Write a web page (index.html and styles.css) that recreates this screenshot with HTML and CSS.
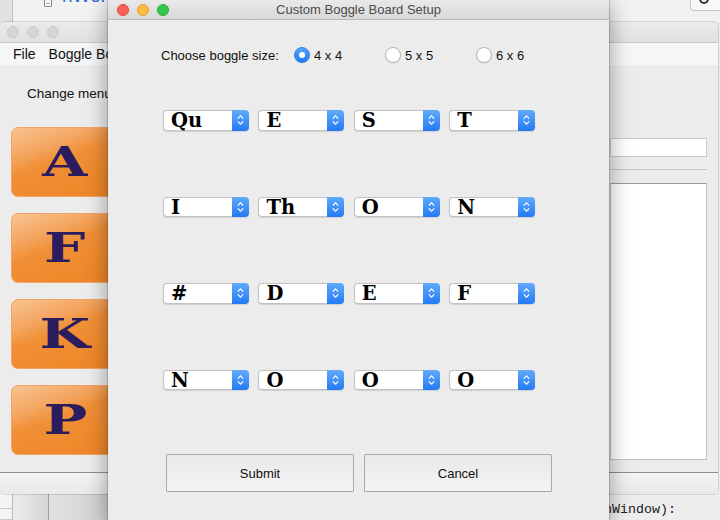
FILE: index.html
```html
<!DOCTYPE html>
<html>
<head>
<meta charset="utf-8">
<link rel="stylesheet" href="styles.css">
</head>
<body>
<div class="desktop">
  <div class="ide-top">
    <div class="ide-gutter"></div>
    <svg class="file-icon" width="12" height="8" viewBox="0 0 12 8"><path d="M1.5 0 V6.5 H8.5 V0" fill="#f4f4f4" stroke="#8d8d8d" stroke-width="1"/><path d="M3 3.5 H7" stroke="#b0b0b0"/></svg>
    <span class="ide-tab">hWorld</span>
    <div class="ide-spacer"></div>
    <div class="ide-btn"><svg width="30" height="11" viewBox="0 0 30 11"><circle cx="13" cy="-1" r="4" fill="none" stroke="#333" stroke-width="2"/></svg></div>
  </div>
  <div class="ide-mid"></div>
  <div class="ide-bottom">
    <div class="tbl-a"><div class="tbl-row"></div><div class="tbl-row"></div></div>
    <div class="tbl-b"></div>
    <div class="tbl-c"></div>
    <div class="code"><span class="code-text">mainWindow):</span></div>
  </div>

  <div class="main-window">
    <div class="mw-title">
      <span class="gdot"></span><span class="gdot"></span><span class="gdot"></span>
    </div>
    <div class="mw-menu"><span>File</span><span>Boggle Board</span></div>
    <div class="mw-body">
      <div class="mw-left">
        <div class="mw-label">Change menu</div>
        <div class="tiles">
          <div class="tile"><span class="tile-letter">A</span></div>
          <div class="tile"><span class="tile-letter">F</span></div>
          <div class="tile"><span class="tile-letter">K</span></div>
          <div class="tile"><span class="tile-letter">P</span></div>
        </div>
      </div>
      <div class="mw-right">
        <div class="field"></div>
        <div class="sep"></div>
        <div class="area"></div>
      </div>
    </div>
    <div class="mw-bottom"></div>
  </div>

  <div class="dialog">
    <div class="dlg-title">
      <div class="lights"><span class="light red"></span><span class="light yellow"></span><span class="light green"></span></div>
      <div class="dlg-title-text">Custom Boggle Board Setup</div>
    </div>
    <div class="dlg-body">
      <div class="size-row">
        <span class="size-label">Choose boggle size:</span>
        <span class="radio-opt"><span class="radio on"></span>4 x 4</span>
        <span class="radio-opt"><span class="radio"></span>5 x 5</span>
        <span class="radio-opt"><span class="radio"></span>6 x 6</span>
      </div>
      <div class="board">
        <div class="combo"><span class="combo-text">Qu</span><span class="combo-arrow"><svg width="9" height="12" viewBox="0 0 9 12"><path d="M1.8 4.6 L4.5 1.9 L7.2 4.6 M1.8 7.4 L4.5 10.1 L7.2 7.4" fill="none" stroke="#fff" stroke-width="1.2"/></svg></span></div>
        <div class="combo"><span class="combo-text">E</span><span class="combo-arrow"><svg width="9" height="12" viewBox="0 0 9 12"><path d="M1.8 4.6 L4.5 1.9 L7.2 4.6 M1.8 7.4 L4.5 10.1 L7.2 7.4" fill="none" stroke="#fff" stroke-width="1.2"/></svg></span></div>
        <div class="combo"><span class="combo-text">S</span><span class="combo-arrow"><svg width="9" height="12" viewBox="0 0 9 12"><path d="M1.8 4.6 L4.5 1.9 L7.2 4.6 M1.8 7.4 L4.5 10.1 L7.2 7.4" fill="none" stroke="#fff" stroke-width="1.2"/></svg></span></div>
        <div class="combo"><span class="combo-text">T</span><span class="combo-arrow"><svg width="9" height="12" viewBox="0 0 9 12"><path d="M1.8 4.6 L4.5 1.9 L7.2 4.6 M1.8 7.4 L4.5 10.1 L7.2 7.4" fill="none" stroke="#fff" stroke-width="1.2"/></svg></span></div>

        <div class="combo"><span class="combo-text">I</span><span class="combo-arrow"><svg width="9" height="12" viewBox="0 0 9 12"><path d="M1.8 4.6 L4.5 1.9 L7.2 4.6 M1.8 7.4 L4.5 10.1 L7.2 7.4" fill="none" stroke="#fff" stroke-width="1.2"/></svg></span></div>
        <div class="combo"><span class="combo-text">Th</span><span class="combo-arrow"><svg width="9" height="12" viewBox="0 0 9 12"><path d="M1.8 4.6 L4.5 1.9 L7.2 4.6 M1.8 7.4 L4.5 10.1 L7.2 7.4" fill="none" stroke="#fff" stroke-width="1.2"/></svg></span></div>
        <div class="combo"><span class="combo-text">O</span><span class="combo-arrow"><svg width="9" height="12" viewBox="0 0 9 12"><path d="M1.8 4.6 L4.5 1.9 L7.2 4.6 M1.8 7.4 L4.5 10.1 L7.2 7.4" fill="none" stroke="#fff" stroke-width="1.2"/></svg></span></div>
        <div class="combo"><span class="combo-text">N</span><span class="combo-arrow"><svg width="9" height="12" viewBox="0 0 9 12"><path d="M1.8 4.6 L4.5 1.9 L7.2 4.6 M1.8 7.4 L4.5 10.1 L7.2 7.4" fill="none" stroke="#fff" stroke-width="1.2"/></svg></span></div>

        <div class="combo"><span class="combo-text">#</span><span class="combo-arrow"><svg width="9" height="12" viewBox="0 0 9 12"><path d="M1.8 4.6 L4.5 1.9 L7.2 4.6 M1.8 7.4 L4.5 10.1 L7.2 7.4" fill="none" stroke="#fff" stroke-width="1.2"/></svg></span></div>
        <div class="combo"><span class="combo-text">D</span><span class="combo-arrow"><svg width="9" height="12" viewBox="0 0 9 12"><path d="M1.8 4.6 L4.5 1.9 L7.2 4.6 M1.8 7.4 L4.5 10.1 L7.2 7.4" fill="none" stroke="#fff" stroke-width="1.2"/></svg></span></div>
        <div class="combo"><span class="combo-text">E</span><span class="combo-arrow"><svg width="9" height="12" viewBox="0 0 9 12"><path d="M1.8 4.6 L4.5 1.9 L7.2 4.6 M1.8 7.4 L4.5 10.1 L7.2 7.4" fill="none" stroke="#fff" stroke-width="1.2"/></svg></span></div>
        <div class="combo"><span class="combo-text">F</span><span class="combo-arrow"><svg width="9" height="12" viewBox="0 0 9 12"><path d="M1.8 4.6 L4.5 1.9 L7.2 4.6 M1.8 7.4 L4.5 10.1 L7.2 7.4" fill="none" stroke="#fff" stroke-width="1.2"/></svg></span></div>

        <div class="combo"><span class="combo-text">N</span><span class="combo-arrow"><svg width="9" height="12" viewBox="0 0 9 12"><path d="M1.8 4.6 L4.5 1.9 L7.2 4.6 M1.8 7.4 L4.5 10.1 L7.2 7.4" fill="none" stroke="#fff" stroke-width="1.2"/></svg></span></div>
        <div class="combo"><span class="combo-text">O</span><span class="combo-arrow"><svg width="9" height="12" viewBox="0 0 9 12"><path d="M1.8 4.6 L4.5 1.9 L7.2 4.6 M1.8 7.4 L4.5 10.1 L7.2 7.4" fill="none" stroke="#fff" stroke-width="1.2"/></svg></span></div>
        <div class="combo"><span class="combo-text">O</span><span class="combo-arrow"><svg width="9" height="12" viewBox="0 0 9 12"><path d="M1.8 4.6 L4.5 1.9 L7.2 4.6 M1.8 7.4 L4.5 10.1 L7.2 7.4" fill="none" stroke="#fff" stroke-width="1.2"/></svg></span></div>
        <div class="combo"><span class="combo-text">O</span><span class="combo-arrow"><svg width="9" height="12" viewBox="0 0 9 12"><path d="M1.8 4.6 L4.5 1.9 L7.2 4.6 M1.8 7.4 L4.5 10.1 L7.2 7.4" fill="none" stroke="#fff" stroke-width="1.2"/></svg></span></div>
      </div>
      <div class="actions">
        <button class="btn">Submit</button>
        <button class="btn">Cancel</button>
      </div>
    </div>
  </div>
</div>
</body>
</html>
```

FILE: styles.css
```css
* { box-sizing: border-box; }
html, body { margin: 0; padding: 0; }
body {
  width: 720px;
  height: 520px;
  overflow: hidden;
  font-family: "Liberation Sans", Arial, sans-serif;
  font-size: 13px;
  color: #1a1a1a;
}
.desktop {
  position: relative;
  width: 720px;
  height: 520px;
  overflow: hidden;
  display: flex;
  flex-direction: column;
  background: #ececec;
}

/* IDE behind */
.ide-top {
  height: 22px;
  display: flex;
  align-items: flex-start;
  overflow: hidden;
  background: #f2f2f2;
}
.ide-gutter {
  width: 13px;
  height: 22px;
  background: #e2e2e2;
  border-right: 1px solid #c4c4c4;
}
.file-icon { margin-left: 30px; margin-top: 0; }
.ide-tab {
  margin-left: 7px;
  margin-top: -15px;
  font-size: 19px;
  line-height: 22px;
  color: #2e6bd6;
}
.ide-spacer { flex: 1; }
.ide-btn {
  width: 30px;
  height: 11px;
  background: #f8f8f8;
  border-left: 1px solid #c6c6c6;
  border-bottom: 1px solid #c6c6c6;
  border-bottom-left-radius: 4px;
}
.ide-btn svg { display: block; }
.ide-mid { flex: 1; }
.ide-bottom {
  height: 27px;
  display: flex;
  background: #ececec;
}
.tbl-a {
  width: 13px;
  background: #f4f4f4;
  border-right: 1px solid #b9b9b9;
  padding-top: 5px;
}
.tbl-row { height: 11px; border-bottom: 1px solid #c9c9c9; }
.tbl-b {
  width: 36px;
  background: linear-gradient(90deg, #ececec, #d6d6d6);
  border-right: 1px solid #a0a0a0;
}
.tbl-c {
  width: 60px;
  background: linear-gradient(90deg, #e2e2e2, #cfcfcf);
}
.code {
  flex: 1;
  background: #ededed;
  padding-left: 471px;
  padding-top: 8px;
  overflow: hidden;
  white-space: nowrap;
}
.code-text {
  font-family: "Liberation Mono", monospace;
  font-size: 13.33px;
  color: #202020;
}

/* Main window */
.main-window {
  position: absolute;
  left: 0;
  top: 22px;
  width: 718px;
  height: 472px;
  display: flex;
  flex-direction: column;
  background: #ececec;
  border-radius: 5px 5px 4px 4px;
  overflow: hidden;
  box-shadow: 0 0 0 1px rgba(0,0,0,0.12);
}
.mw-title {
  height: 21px;
  flex: none;
  background: linear-gradient(#ebebeb, #e1e1e1);
  border-bottom: 1px solid #c9c9c9;
  display: flex;
  align-items: center;
  gap: 8px;
  padding-left: 7px;
}
.gdot {
  width: 12px;
  height: 12px;
  border-radius: 50%;
  background: #d6d6d6;
  border: 1px solid #cacaca;
}
.mw-menu {
  height: 22px;
  flex: none;
  background: #f6f6f6;
  display: flex;
  align-items: center;
  gap: 13px;
  padding-left: 13px;
  font-size: 14px;
  color: #111;
}
.mw-body {
  flex: 1;
  display: flex;
  border-bottom: 1px solid #8e8e8e;
}
.mw-left { flex: 1; padding-left: 11px; padding-top: 21px; }
.mw-label { padding-left: 16px; line-height: 16px; font-size: 13.5px; color: #111; }
.tiles {
  margin-top: 25px;
  display: flex;
  flex-direction: column;
  gap: 16px;
}
.tile {
  width: 120px;
  height: 70px;
  border-radius: 7px;
  border: 1px solid #f2a466;
  background: linear-gradient(160deg, #f8c491 0%, #f4a560 28%, #f18f36 44%, #ef8a2d 70%, #ee8428 100%);
  display: flex;
  align-items: center;
  justify-content: center;
  padding-right: 12px;
}
.tile-letter {
  font-family: "DejaVu Serif", serif;
  font-weight: bold;
  font-size: 41px;
  color: #2a1c5e;
  transform: scaleX(1.42);
  line-height: 1;
}
.mw-right {
  width: 97px;
  margin-right: 11px;
  padding-top: 73px;
}
.field {
  height: 19px;
  background: #fff;
  border: 1px solid #c9c9c9;
}
.sep {
  margin-top: 12px;
  border-top: 1px solid #c6c6c6;
}
.area {
  margin-top: 13px;
  height: 277px;
  background: #fff;
  border: 1px solid #c2c2c2;
  border-top-color: #9a9a9a;
}
.mw-bottom {
  height: 21px;
  flex: none;
  background: linear-gradient(#f3f3f3, #e9e9e9);
}

/* Dialog */
.dialog {
  position: absolute;
  left: 108px;
  top: 0;
  width: 501px;
  height: 524px;
  background: #ececec;
  border-radius: 0 0 5px 5px;
  box-shadow: 0 0 0 1px rgba(0,0,0,0.16), 0 4px 22px rgba(0,0,0,0.38);
  display: flex;
  flex-direction: column;
}
.dlg-title {
  height: 20px;
  flex: none;
  display: grid;
  align-items: center;
  background: linear-gradient(#e9e9e9, #d9d9d9);
  border-bottom: 1px solid #b9b9b9;
}
.lights, .dlg-title-text { grid-area: 1 / 1; }
.lights { display: flex; gap: 8px; padding-left: 9px; }
.light {
  width: 12px;
  height: 12px;
  border-radius: 50%;
}
.light.red { background: #fc605c; border: 1px solid #e0443e; }
.light.yellow { background: #fdbc40; border: 1px solid #dea236; }
.light.green { background: #34c84a; border: 1px solid #27aa35; }
.dlg-title-text {
  justify-self: center;
  font-size: 13px;
  color: #4c4c4c;
}
.dlg-body {
  flex: 1;
  padding: 25px 0 0 53px;
}
.size-row {
  height: 20px;
  display: flex;
  align-items: center;
  font-size: 13px;
  color: #111;
}
.size-label { width: 133px; }
.radio-opt {
  width: 91px;
  display: flex;
  align-items: center;
  gap: 4px;
}
.radio {
  width: 16px;
  height: 16px;
  border-radius: 50%;
  background: #fff;
  border: 1px solid #b4b4b4;
  box-shadow: 0 0.5px 1px rgba(0,0,0,0.1);
  display: flex;
  align-items: center;
  justify-content: center;
}
.radio.on {
  background: linear-gradient(#56a6fa, #1f78f0);
  border-color: #2a7ff0;
}
.radio.on::after {
  content: "";
  width: 6px;
  height: 6px;
  border-radius: 50%;
  background: #fff;
}
.board {
  margin-top: 45px;
  margin-left: 2px;
  display: grid;
  grid-template-columns: repeat(4, 86px);
  grid-auto-rows: 20.5px;
  column-gap: 9.4px;
  row-gap: 66px;
}
.combo {
  display: flex;
  border-radius: 4px;
  box-shadow: 0 1px 1px rgba(0,0,0,0.12);
}
.combo-text {
  flex: 1;
  background: #fff;
  border: 1px solid #c2c2c2;
  border-right: none;
  border-radius: 4px 0 0 4px;
  padding-left: 7px;
  padding-top: 1px;
  font-family: "DejaVu Serif", serif;
  font-weight: bold;
  font-size: 19.5px;
  line-height: 18px;
  color: #000;
  white-space: nowrap;
  overflow: visible;
}
.combo-arrow {
  width: 17px;
  background: linear-gradient(#62aafb, #237af4);
  border-radius: 0 4px 4px 0;
  display: flex;
  align-items: center;
  justify-content: center;
}
.actions {
  margin-top: 64px;
  margin-left: 5px;
  display: flex;
  gap: 10px;
}
.btn {
  width: 188px;
  height: 38px;
  border: 1px solid #aaaaaa;
  border-radius: 1px;
  background: linear-gradient(#e8e8e8, #f4f4f4);
  font-family: "Liberation Sans", Arial, sans-serif;
  font-size: 13px;
  color: #111;
  padding: 0;
}
```
